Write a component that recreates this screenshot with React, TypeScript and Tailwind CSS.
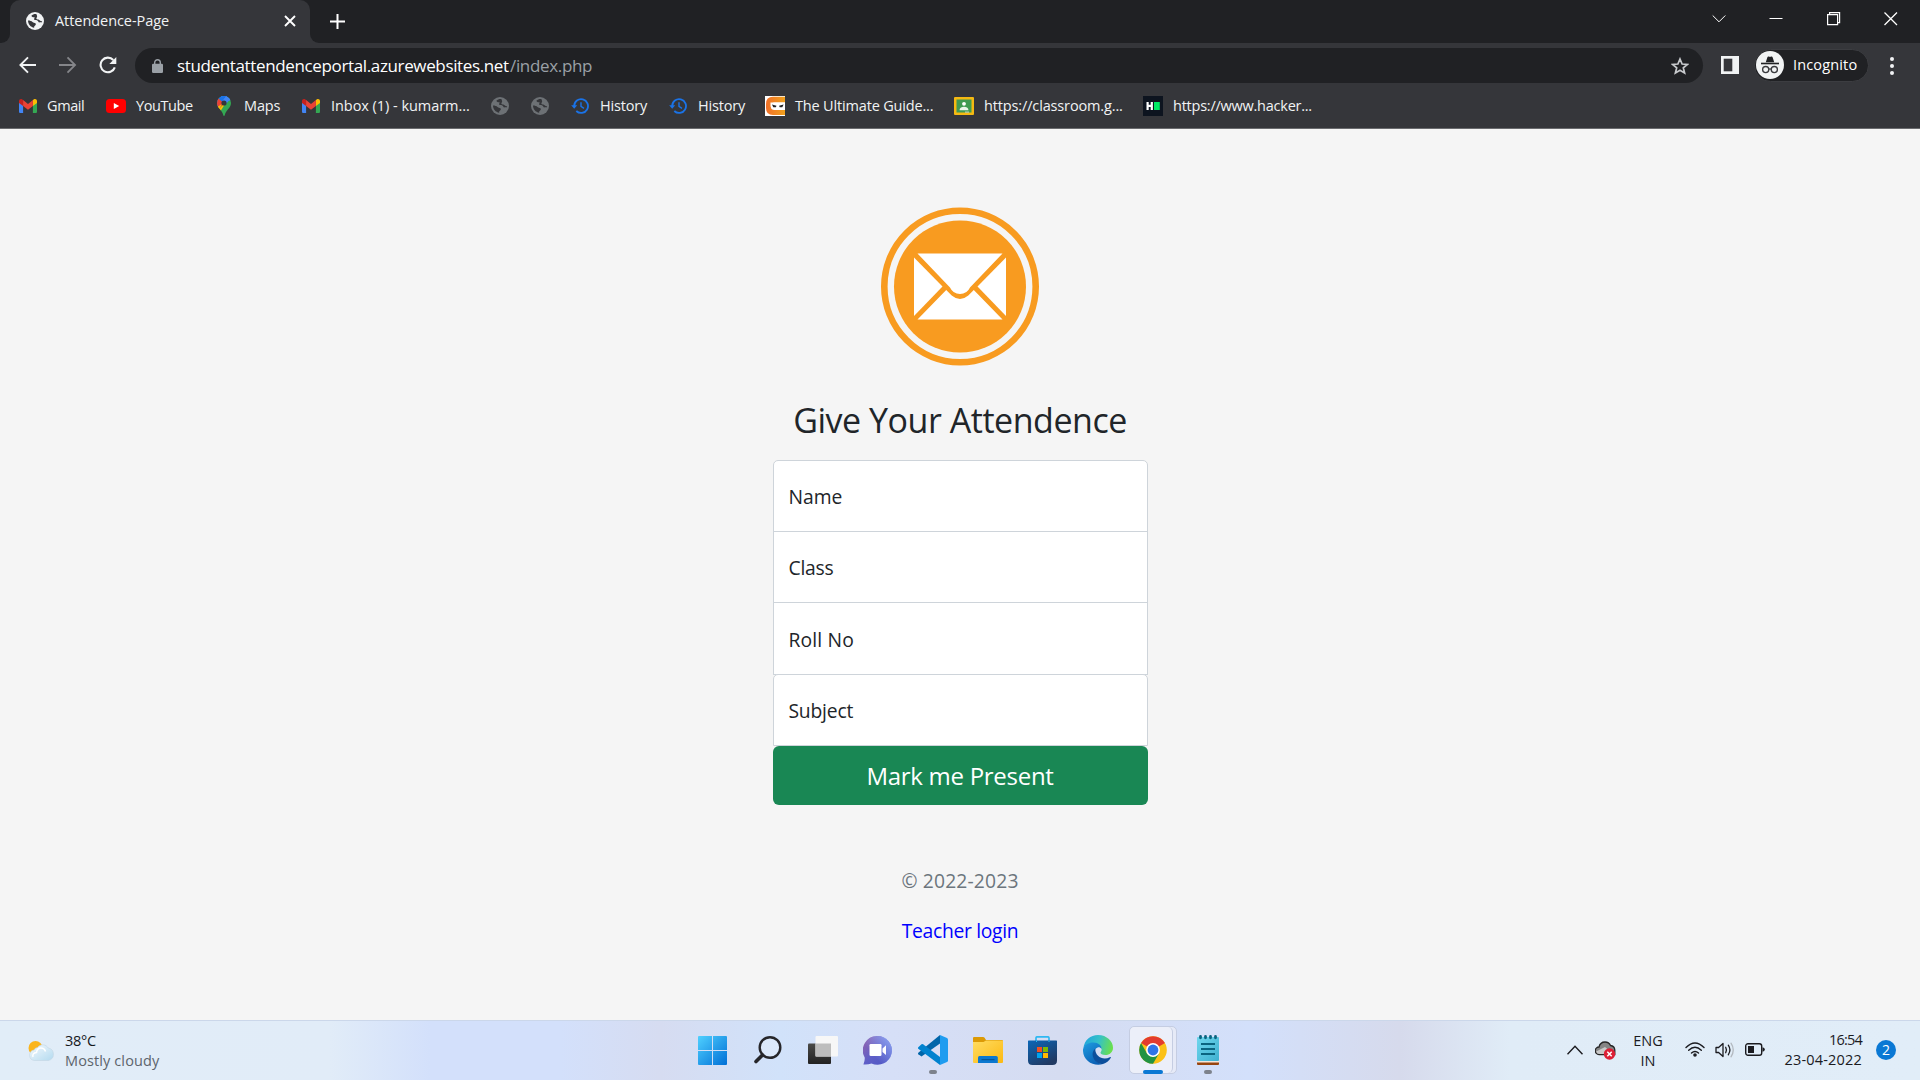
import React from 'react';

function Globe({ className }: { className: string }) {
  return (
    <svg viewBox="0 0 18 18" className={className}>
      <circle cx="9" cy="9" r="9" fill="currentColor" />
      <path
        d="M10.3 2.1C8.2 1.9 6.6 2.6 5.4 3.8c.3 1.3 1.500 1.500 2.700 1.500.9 0 .7.8.2 1.100-.7.5-.2 1.500.8 1.500 1.700 0 3 .5 3.200 1.600.2.9 1.100 1 2 .8.6-.1 1.100 0 1.500.3.2-.5.3-1 .3-1.600-.6.3-1.300.4-1.900-.2-.7-.7-1.400-1.300-2.500-1.300-1 0-1.500-.6-1.300-1.400.2-.7.7-.8.7-1.700 0-.8-.3-1.500-.8-2.300z"
        className="fill-[#35363a]"
      />
      <path
        d="M2 8.600c0 3.600 2.600 6.700 6.200 7.200-.2-1 .1-1.800.9-2.300.9-.6.9-1.500.3-2.200-.8-.9-1.900-.6-2.900-1.400C5.600 9.200 4 8.600 2 8.600z"
        className="fill-[#35363a]"
      />
    </svg>
  );
}

function GmailIcon() {
  return (
    <svg viewBox="0 0 18 14" className="ml-px h-[14px] w-[18px]">
      <path d="M0 2v10.700C0 13.400.6 14 1.300 14h2.800V5z" fill="#4285f4" />
      <path d="M18 2v10.700c0 .7-.6 1.300-1.300 1.300h-2.800V5z" fill="#34a853" />
      <path d="M0 2C0 .3 1.900-.6 3.300.5l.8.600V7L0 4z" fill="#c5221f" />
      <path d="M18 2c0-1.700-1.900-2.600-3.300-1.500l-.8.600V7L18 4z" fill="#fbbc04" />
      <path d="M4.100 1.100 9 4.900l4.900-3.800V7L9 10.700 4.100 7z" fill="#ea4335" />
    </svg>
  );
}

function YoutubeIcon() {
  return (
    <svg viewBox="0 0 20 14" className="h-[14px] w-5">
      <rect width="20" height="14" rx="3.500" fill="#f00" />
      <path d="M7.800 4v6l5.400-3z" fill="#fff" />
    </svg>
  );
}

function MapsIcon() {
  return (
    <svg viewBox="0 0 14 20" className="ml-[3px] h-5 w-[14px]">
      <clipPath id="pin">
        <path d="M7 0a7 7 0 0 1 7 7c0 3-1.700 4.700-3.200 6.500C9.200 15.500 8.300 17 7.800 19c-.2 1.300-1.400 1.300-1.600 0-.5-2-1.400-3.500-3-5.500C1.700 11.700 0 10 0 7a7 7 0 0 1 7-7z" />
      </clipPath>
      <g clipPath="url(#pin)">
        <rect width="14" height="20" fill="#34a853" />
        <path d="M-1 14 14-3v-2H-2z" fill="#1a73e8" />
        <path d="M3 0 14-2v6L7 7z" fill="#4285f4" />
        <path d="M-1 1 1.800 2.500 7 7 2.500 12.500-2 9z" fill="#ea4335" />
        <path d="M2.400 12.700 11.700 1.800 8 8 3.600 15-1 13l2-2.500L5 8z" fill="#fbbc04" />
        <path d="M1.600 2.600 5 5.400 9.500 0H4z" fill="#1a73e8" />
        <path d="M9.500 0 5 5.400 9 8l4-5z" fill="#4285f4" />
      </g>
      <circle cx="7" cy="7" r="2.600" fill="#35363a" />
    </svg>
  );
}

function HistoryIcon() {
  return (
    <svg viewBox="0 0 18 16" className="ml-px h-4 w-[18px]" fill="none" stroke="#1a73e8" strokeWidth="1.800">
      <path d="M3.200 8a6.900 6.900 0 1 1 2.100 5" />
      <path d="M.2 7.300h6L3.200 10.700z" fill="#1a73e8" stroke="none" />
      <path d="M10 4.200v4.200l3 1.900" strokeWidth="1.400" />
    </svg>
  );
}

function NinjaIcon() {
  return (
    <svg viewBox="0 0 20 20" className="h-5 w-5">
      <defs>
        <linearGradient id="nj" x2="1">
          <stop stopColor="#f0702a" />
          <stop offset="1" stopColor="#f0a01c" />
        </linearGradient>
      </defs>
      <rect width="20" height="20" fill="#fff" />
      <path d="M20 .8v5.700H9.500Q6 6.500 6 9.500v1.500q0 3 3.500 3H20v5H8q-7 0-7-7V8Q1 .8 8 .8z" fill="url(#nj)" />
      <path d="M5.500 6.500H20v6.500H9q-3.500 0-3.500-3.500z" fill="#fff" />
      <path d="M7 8.600l4.500 1.200-.6 1.500H8.300zM18.600 8.600l-4.500 1.200.6 1.500h2.600z" fill="#222" />
    </svg>
  );
}

function ClassroomIcon() {
  return (
    <svg viewBox="0 0 20 18" className="mt-px h-[18px] w-5">
      <rect width="20" height="18" rx="1" fill="#f5b912" />
      <rect x="2.500" y="2.500" width="15" height="13" fill="#3f9a52" />
      <circle cx="10" cy="6.800" r="1.900" fill="#fff" />
      <path d="M5.600 12.800c0-2 2.300-3.100 4.400-3.100s4.400 1.100 4.400 3.100v.4H5.600z" fill="#e8f5e9" />
      <path d="M11 14.600h4v.9h-4z" fill="#ddd" />
    </svg>
  );
}

function HackerRankIcon() {
  return (
    <svg viewBox="0 0 20 20" className="h-5 w-5">
      <rect width="20" height="20" fill="#0d141f" />
      <path d="M3.500 6h2.200v2.800h2V6h2.200v8H7.700v-3h-2v3H3.500z" fill="#fff" />
      <rect x="11" y="6" width="5.800" height="8" fill="#00ea64" />
    </svg>
  );
}

const bookmarks: { icon: React.ReactNode; text: string; box: string; label: string }[] = [
  { icon: <GmailIcon />, text: 'Gmail', box: 'w-[88px]', label: 'tracking-[-0.4px] -ml-px' },
  { icon: <YoutubeIcon />, text: 'YouTube', box: 'w-[108px]', label: 'tracking-[-0.4px]' },
  { icon: <MapsIcon />, text: 'Maps', box: 'w-[87px]', label: 'tracking-[-0.16px]' },
  { icon: <GmailIcon />, text: 'Inbox (1) - kumarm...', box: 'w-[189px]', label: 'tracking-[-0.045px]' },
  { icon: <Globe className="ml-px h-[18px] w-[18px] text-[#6d7175]" />, text: '', box: 'w-10', label: '' },
  { icon: <Globe className="ml-px h-[18px] w-[18px] text-[#6d7175]" />, text: '', box: 'w-10', label: '' },
  { icon: <HistoryIcon />, text: 'History', box: 'w-[98px]', label: 'tracking-[-0.2px]' },
  { icon: <HistoryIcon />, text: 'History', box: 'w-[97px]', label: 'tracking-[-0.2px]' },
  { icon: <NinjaIcon />, text: 'The Ultimate Guide...', box: 'w-[189px]', label: 'tracking-[-0.17px]' },
  { icon: <ClassroomIcon />, text: 'https://classroom.g...', box: 'w-[189px]', label: 'tracking-[-0.14px]' },
  { icon: <HackerRankIcon />, text: 'https://www.hacker...', box: 'w-[189px]', label: 'tracking-[-0.24px]' },
];

function TabStrip() {
  return (
    <div className="flex h-[43px] items-stretch bg-[#202124]">
      <div className="flex w-[10px] items-end bg-[#35363a]">
        <div className="h-full w-full rounded-br-[9px] bg-[#202124]" />
      </div>
      <div className="bg-[#202124]">
        <div className="flex h-full w-[300px] items-center rounded-t-[10px] bg-[#35363a] pl-4">
          <Globe className="mt-[-1px] h-[18px] w-[18px] text-[#f1f3f4]" />
          <span className="mt-[-1px] ml-[11px] w-[229px] text-[14.5px] tracking-[-0.06px] text-[#f1f3f4]">Attendence-Page</span>
          <svg viewBox="0 0 12 12" className="mt-[-2px] h-3 w-3" stroke="#fff" strokeWidth="1.900">
            <path d="M1 1l10 10M11 1L1 11" />
          </svg>
        </div>
      </div>
      <div className="flex w-[10px] items-end bg-[#35363a]">
        <div className="h-full w-full rounded-bl-[9px] bg-[#202124]" />
      </div>
      <div className="flex flex-1 items-center pl-[10px]">
        <svg viewBox="0 0 15 15" className="h-[15px] w-[15px]" stroke="#fff" strokeWidth="2">
          <path d="M7.500 0v15M0 7.500h15" />
        </svg>
      </div>
      <div className="flex w-[209px] items-start gap-[43px] pt-3 text-white">
        <svg viewBox="0 0 14 14" className="ml-px h-[14px] w-[14px]" fill="none" stroke="currentColor" strokeWidth="1">
          <path d="M.7 3.500 7 9.800l6.300-6.300" />
        </svg>
        <svg viewBox="0 0 14 14" className="h-[14px] w-[14px]" stroke="currentColor">
          <path d="M.5 6.500h13" />
        </svg>
        <svg viewBox="0 0 14 14" className="ml-px h-[14px] w-[14px]" fill="none" stroke="currentColor" strokeWidth="1.200">
          <path d="M.6 2.600h10v10H.6zM2.600 2.600v-2h10v10h-2" />
        </svg>
        <svg viewBox="0 0 14 14" className="h-[14px] w-[14px]" stroke="currentColor" strokeWidth="1.300">
          <path d="M.5.5l12.500 12.500M13 .5L.5 13" />
        </svg>
      </div>
    </div>
  );
}

function Toolbar() {
  return (
    <div className="flex h-10 items-start bg-[#35363a] pt-[5px]">
      <div className="flex h-[35px] w-[135px] items-center pl-[19px] text-[#f1f3f4]">
        <svg viewBox="0 0 18 18" className="mt-[-1px] mr-[22px] h-[18px] w-[18px]" fill="none" stroke="currentColor" strokeWidth="1.900">
          <path d="M17 9H1.500M9 1.300 1.400 9 9 16.700" />
        </svg>
        <svg viewBox="0 0 18 18" className="mt-[-1px] mr-[22px] h-[18px] w-[18px] text-[#85868a]" fill="none" stroke="currentColor" strokeWidth="1.800">
          <path d="M0 9h16M8.500 1.300 16.100 9l-7.600 7.700" />
        </svg>
        <svg viewBox="0 0 18 18" className="mt-[-1px] h-[18px] w-[18px]" fill="none" stroke="currentColor" strokeWidth="2.100">
          <path d="M15.800 11.300A7.300 7.300 0 1 1 14.300 4" />
          <path d="M17.300 1v7h-7z" fill="currentColor" stroke="none" />
        </svg>
      </div>
      <div className="flex h-[35px] w-[1568px] items-center rounded-full bg-[#202124] pr-[14px] pl-[17px]">
        <svg viewBox="0 0 11 14" className="h-[14px] w-[11px]">
          <path d="M2.700 6V3.500a2.800 2.800 0 0 1 5.600 0V6" fill="none" stroke="#9aa0a6" strokeWidth="1.400" />
          <rect y="4.800" width="11" height="9.200" rx="1.200" fill="#9aa0a6" />
        </svg>
        <span className="mt-px ml-[14px] w-[333px] text-[17px] tracking-[-0.36px] whitespace-nowrap text-white">
          studentattendenceportal.azurewebsites.net
        </span>
        <span className="mt-px flex-1 text-[17px] tracking-[-0.34px] text-[#9aa0a6]">/index.php</span>
        <svg viewBox="0 0 18 18" className="h-[18px] w-[18px]" fill="none" stroke="#c8cacd" strokeWidth="1.700">
          <path d="M9 2l2.100 5 5.300.4-4.100 3.400 1.300 5.200L9 13.200 4.400 16l1.300-5.200L1.600 7.400 6.900 7z" />
        </svg>
      </div>
      <div className="flex h-[35px] flex-1 items-center">
        <svg viewBox="0 0 18 18" className="mt-[-1px] ml-[18px] h-[18px] w-[18px]">
          <rect width="18" height="18" fill="#f1f3f4" />
          <rect x="2.700" y="2.700" width="8.600" height="12.600" fill="#35363a" />
        </svg>
        <div className="mt-[-1px] ml-[15px] flex h-[33px] w-[115px] items-center rounded-full border border-[#3c3d41] bg-[#202124] pl-px">
          <svg viewBox="0 0 28 28" className="h-7 w-7">
            <circle cx="14" cy="14" r="14" fill="#f1f3f4" />
            <path d="M9.800 11.200l1.500-4.800c.3-.8.900-1.100 1.700-.8l1 .3 1-.3c.8-.3 1.400 0 1.700.8l1.500 4.800z" fill="#202124" />
            <rect x="5" y="11.700" width="18" height="1.600" fill="#202124" />
            <g fill="none" stroke="#3a3b3f" strokeWidth="1.300">
              <circle cx="9.700" cy="18.600" r="3.100" />
              <circle cx="18.300" cy="18.600" r="3.100" />
              <path d="M12.800 18.300q1.200-.9 2.400 0" />
            </g>
          </svg>
          <span className="mt-[-1px] ml-[9px] text-[14.5px] tracking-[0.15px] text-white">Incognito</span>
        </div>
        <div className="ml-[21px] flex flex-col gap-[3px]">
          <i className="h-1 w-1 rounded-full bg-[#f1f3f4]" />
          <i className="h-1 w-1 rounded-full bg-[#f1f3f4]" />
          <i className="h-1 w-1 rounded-full bg-[#f1f3f4]" />
        </div>
      </div>
    </div>
  );
}

function BookmarksBar() {
  return (
    <div className="flex h-[46px] items-center border-b border-[#6a6b6e] bg-[#35363a] pl-[18px]">
      {bookmarks.map((b, i) => (
        <div key={i} className={'flex shrink-0 items-center ' + b.box}>
          <span className="flex w-[30px] shrink-0 items-center">{b.icon}</span>
          <span className={'text-[14.5px] leading-5 whitespace-nowrap text-[#f1f3f4] ' + b.label}>{b.text}</span>
        </div>
      ))}
    </div>
  );
}

function EnvelopeLogo() {
  return (
    <svg viewBox="0 -0.5 160 160" className="h-40 w-40">
      <circle cx="80" cy="80" r="75.700" fill="none" stroke="#f89b20" strokeWidth="6.600" />
      <circle cx="80" cy="80" r="66" fill="#f89b20" />
      <g fill="#fff">
        <path d="M37.500 47h85L90 81q-3 6.500-10 6.500T70 81z" />
        <path d="M34 51 62.500 80 34 109.500z" />
        <path d="M126 51 97.500 80 126 109.500z" />
        <path d="M37.500 113 66.200 83.500l5.500 5.500q8.300 7 16.600 0l5.500-5.500 28.700 29.500z" />
      </g>
    </svg>
  );
}

function AttendancePage() {
  return (
    <main className="flex h-[891px] flex-col items-center bg-[#f5f5f5] pt-[77px] text-[#212529]">
      <EnvelopeLogo />
      <h1 className="mt-[33px] h-[42px] text-[34px] leading-[42px] tracking-[-0.47px] whitespace-nowrap">Give Your Attendence</h1>
      <form className="mt-[19px] flex w-[375px] flex-col text-[19.3px]">
        <div className="flex h-[72px] items-center rounded-t-[5px] border border-[#ced4da] bg-white pt-0.5 pl-[15px] tracking-[-0.03px]">Name</div>
        <div className="mt-[-1px] flex h-[72px] items-center border border-[#ced4da] bg-white pt-0.5 pl-[15px] tracking-[-0.23px]">Class</div>
        <div className="mt-[-1px] flex h-[73px] items-center border border-[#ced4da] bg-white pt-[3px] pl-[15px] tracking-[0.15px]">Roll No</div>
        <div className="mt-[-1px] flex h-[72px] items-center rounded-t-[5px] border border-[#ced4da] bg-white pt-0.5 pl-[15px] tracking-[-0.2px]">
          Subject
        </div>
        <button type="button" className="h-[59px] rounded-[6px] bg-[#198754] text-[24px] tracking-[-0.28px] text-white">
          Mark me Present
        </button>
      </form>
      <p className="mt-[61px] h-[30px] text-[19.3px] leading-[30px] tracking-[0.16px] text-[#6c757d]">© 2022-2023</p>
      <a className="mt-5 h-[30px] text-[19.3px] leading-[30px] tracking-[-0.31px] text-[#0000ff]">Teacher login</a>
    </main>
  );
}

function AppSlot({ children, mark }: { children: React.ReactNode; mark?: string }) {
  return (
    <div className="flex h-full w-[55px] flex-col items-center pt-[15px]">
      <div className="flex h-[30px] items-center justify-center">{children}</div>
      {mark && <i className={'mt-[5px] h-1 rounded-full ' + mark} />}
    </div>
  );
}

function TaskbarApps() {
  return (
    <div className="flex h-full w-[550px]">
      <AppSlot>
        <svg viewBox="0 0 29 29" className="h-[29px] w-[29px]">
          <defs>
            <linearGradient id="win" x1="0" y1="0" x2="1" y2="1" gradientTransform="scale(29)" gradientUnits="userSpaceOnUse">
              <stop stopColor="#4fd0ff" />
              <stop offset="1" stopColor="#006fd6" />
            </linearGradient>
          </defs>
          <path d="M0 1q0-1 1-1h13v14H0zM15 0h13q1 0 1 1v13H15zM0 15h14v14H1q-1 0-1-1zM15 15h14v13q0 1-1 1H15z" fill="url(#win)" />
        </svg>
      </AppSlot>
      <AppSlot>
        <svg viewBox="0 0 28 28" className="h-7 w-7" fill="none" stroke="#26262a">
          <circle cx="16" cy="11.500" r="10.300" strokeWidth="2.400" fill="#e6effb" fillOpacity=".5" />
          <path d="M8.500 19 2 25.500" strokeWidth="3.600" strokeLinecap="round" />
        </svg>
      </AppSlot>
      <AppSlot>
        <svg viewBox="0 0 30 28" className="h-7 w-[30px]">
          <defs>
            <linearGradient id="tv" x2="0" y2="1">
              <stop stopColor="#4a4a48" />
              <stop offset="1" stopColor="#222" />
            </linearGradient>
          </defs>
          <rect y="7.500" width="23" height="20.500" rx="1" fill="url(#tv)" />
          <rect x="7.500" width="22.500" height="20.500" rx="1" fill="#f7f7f7" />
          <rect x="7.500" y="7.500" width="15.500" height="13" fill="#bdbdbd" />
        </svg>
      </AppSlot>
      <AppSlot>
        <svg viewBox="0 0 29 29" className="h-[29px] w-[29px]">
          <defs>
            <linearGradient id="chat" x2="1" y2="1">
              <stop stopColor="#9a62a8" />
              <stop offset=".5" stopColor="#5f5fc7" />
              <stop offset="1" stopColor="#4b54c4" />
            </linearGradient>
            <linearGradient id="chat2" x1="1" x2="0.300" y2=".6">
              <stop stopColor="#8fa8f5" />
              <stop offset="1" stopColor="#8fa8f5" stopOpacity="0" />
            </linearGradient>
          </defs>
          <path d="M14.500 0A14.400 14.400 0 1 1 8.500 27.500Q5 28.800.4 28.500 2 25 1.700 21.500A14.400 14.400 0 0 1 14.500 0z" fill="url(#chat)" />
          <circle cx="14.500" cy="14.400" r="14.400" fill="url(#chat2)" />
          <rect x="6.500" y="8" width="12" height="12" rx="1.300" fill="#fff" />
          <path d="M19.500 12.500 23 9.300v9.800l-3.500-3.200z" fill="#fff" />
        </svg>
      </AppSlot>
      <AppSlot mark="w-2 bg-[#7d828c]">
        <svg viewBox="0 0 30 30" className="h-[30px] w-[30px]">
          <path d="M22 0v8.500L3.500 21.500.3 19.300q-.6-.8 0-1.600z" fill="#0065a9" />
          <path d="M.3 12.300 3.500 9.300q.8-.5 1.600 0L22 22v8L.3 13.800q-.6-.8 0-1.500z" fill="#0082cf" />
          <path d="M22 0l7 3q1 .6 1 1.600v20.800q0 1-1 1.600l-7 3z" fill="#1f9cf0" />
        </svg>
      </AppSlot>
      <AppSlot>
        <svg viewBox="0 0 30 26" className="h-[26px] w-[30px]">
          <defs>
            <linearGradient id="fold" x2="1" y2="1">
              <stop stopColor="#ffdc62" />
              <stop offset="1" stopColor="#fcb912" />
            </linearGradient>
          </defs>
          <path d="M0 1q0-1 1-1h9q1 0 1.600.700L13 3h16q1 0 1 1v6H0z" fill="#dc9a06" />
          <path d="M0 5h10.500L13 3.500h17V25q0 1-1 1H1q-1 0-1-1z" fill="url(#fold)" />
          <path d="M5 26v-5.500Q5 19 6.500 19h16.700q1.600 0 1.600 1.500V26z" fill="#0b78d0" />
          <path d="M8.500 22.700h13" stroke="#064f8c" />
        </svg>
      </AppSlot>
      <AppSlot>
        <svg viewBox="0 0 29 29" className="h-[29px] w-[29px]">
          <defs>
            <linearGradient id="st" x2=".6" y2="1">
              <stop stopColor="#0b67b8" />
              <stop offset="1" stopColor="#213a63" />
            </linearGradient>
          </defs>
          <path d="M8 6V2q0-1.200 1.200-1.200h10.600Q21 .8 21 2v4" fill="none" stroke="#2fb8f2" strokeWidth="1.700" />
          <path d="M0 5q0-.6.600-.6h27.800q.6 0 .6.600v19.500q0 4.500-4.500 4.500h-20Q0 29 0 24.500z" fill="url(#st)" />
          <path d="M8 4.400h1v1.500H8zM20.500 4.400h1v1.500h-1z" fill="#2fb8f2" />
          <path d="M9 11h5v5H9z" fill="#f25022" />
          <path d="M15 11h5v5h-5z" fill="#7fba00" />
          <path d="M9 17h5v5H9z" fill="#00a4ef" />
          <path d="M15 17h5v5h-5z" fill="#ffb900" />
        </svg>
      </AppSlot>
      <AppSlot>
        <svg viewBox="0 0 30 30" className="h-[30px] w-[30px]">
          <defs>
            <linearGradient id="e1" x1="0" x2="1" y1=".3" y2=".5">
              <stop stopColor="#1fa5dd" />
              <stop offset=".5" stopColor="#35c1c8" />
              <stop offset="1" stopColor="#6be04b" />
            </linearGradient>
            <linearGradient id="e2" x2=".6" y2="1">
              <stop stopColor="#1f9de0" />
              <stop offset="1" stopColor="#0a5fb5" />
            </linearGradient>
          </defs>
          <path d="M.4 13C1.500 5 7.500 0 15 0c9 0 15 6.500 15 12.700 0 4.600-3.500 7.300-7.500 7.300-3.500 0-5-1.300-5-2.200 0-.8 1.100-1.300 1.100-3.300 0-3-3-6-8-6C5.500 8.500 1.500 10.500.4 13z" fill="url(#e1)" />
          <path d="M0 14.500C.8 9.500 5.500 7.500 10.300 7.500c5.200 0 8.300 3 8.300 6.500-1-1.500-2.500-2-4-1.500-3 1-4.800 5-3.600 9 1.200 4.200 4.500 7 9 7.500C10.500 32-.5 25.500 0 14.500z" fill="url(#e2)" />
          <path d="M12.300 13.800c-2.800 2-3.300 5.700-2 8.700 1.500 4 5.500 6.700 9.700 6.500 3.300-1 6-3 7.700-6 .4-.8-.2-1.200-.9-.8-6.300 3.300-14.800-.2-14.500-8.400z" fill="#0c4f9c" />
        </svg>
      </AppSlot>
      <div className="flex h-full w-[55px] pt-[6px] pl-[4px]">
        <div className="h-12 w-12 rounded-[5px] border border-[#c5cde2] bg-[#e6eaf7]">
          <div className="flex h-[46px] w-[43px] flex-col items-center rounded-[5px] border-r border-[#c5cde2] bg-[#eceff9] pt-[9px]">
            <svg viewBox="0 0 28 28" className="ml-1 h-7 w-7 shrink-0">
              <circle cx="14" cy="14" r="13.800" fill="#fbc116" />
              <path d="M14 14 2.050 7.100A13.800 13.800 0 0 1 25.950 7.100z" fill="#e33b2e" />
              <path d="M14 27.800l5.980-10.350L14 20.900 8 17.450 2.050 7.100A13.800 13.800 0 0 0 14 27.800z" fill="#229342" />
              <circle cx="14" cy="14" r="6.900" fill="#fff" />
              <circle cx="14" cy="14" r="5.400" fill="#2f74e8" />
            </svg>
            <i className="mt-[6px] ml-1 h-1 w-5 shrink-0 rounded-full bg-[#0a78d4]" />
          </div>
        </div>
      </div>
      <AppSlot mark="w-2 bg-[#7d828c]">
        <svg viewBox="0 0 22 30" className="h-[30px] w-[22px]">
          <defs>
            <linearGradient id="np" x2="1" y2="1">
              <stop stopColor="#6fd7ee" />
              <stop offset="1" stopColor="#3fb0d0" />
            </linearGradient>
          </defs>
          <path d="M0 27h22v2q0 1-1 1H1q-1 0-1-1z" fill="#974510" />
          <path d="M0 25.500h22v2H0z" fill="#f3e6dc" />
          <rect y="2" width="22" height="24" rx="1" fill="url(#np)" />
          <path d="M4 9h14M4 14h14M4 19h14" stroke="#0b6480" strokeWidth="1.900" />
          <path d="M3.500 1.500v1.300M8.500 1.500v1.300M13.500 1.500v1.300M18.500 1.500v1.300" stroke="#0b6480" strokeWidth="2.800" strokeLinecap="round" />
        </svg>
      </AppSlot>
    </div>
  );
}

function Tray() {
  return (
    <div className="flex h-full w-[353px] items-start text-[14.5px] leading-5 text-[#1b1b1f]">
      <svg viewBox="0 0 16 10" className="mt-[25px] h-[10px] w-4" fill="none" stroke="currentColor" strokeWidth="1.400">
        <path d="M.5 9.200 8 1.200l7.500 8" />
      </svg>
      <svg viewBox="0 0 21 19" className="mt-[21px] ml-3 h-[19px] w-[21px]">
        <path d="M4 13.500A3.700 3.700 0 0 1 4 6q1.200-5 6-5 4 0 5.500 3.500Q19.500 5 19.800 9v4.500z" fill="#858585" stroke="#262626" strokeWidth="1.300" />
        <path d="M1.200 10.500 10 6l8.500 7H4q-2.500-.5-2.800-2.500z" fill="#c9c9c9" />
        <circle cx="14.500" cy="13" r="5.700" fill="#dc1f35" />
        <path d="M12.300 10.800l4.400 4.400M16.700 10.800l-4.400 4.400" stroke="#fff" strokeWidth="1.500" />
      </svg>
      <div className="mt-[11px] ml-[17px] w-[30px] text-center">
        <div>ENG</div>
        <div>IN</div>
      </div>
      <svg viewBox="0 0 20 15" className="mt-[22px] ml-[22px] h-[15px] w-5" fill="none" stroke="currentColor" strokeWidth="1.400" strokeLinecap="round">
        <path d="M1 5.500q9-9 18 0M3.700 8.300q6.300-6 12.600 0M6.500 11q3.500-3.200 7 0" />
        <circle cx="10" cy="13" r="1.100" fill="currentColor" />
      </svg>
      <svg viewBox="0 0 20 16" className="mt-[22px] ml-[10px] h-4 w-5" fill="none" stroke="currentColor" strokeWidth="1.300" strokeLinecap="round">
        <path d="M1 5.500h2.600L8 1.500v13l-4.400-4H1z" strokeLinejoin="round" />
        <path d="M10.700 5.300q1.600 2.700 0 5.400M13.300 3.200q3.200 4.800 0 9.600" />
        <path d="M16 1.200q4.500 6.800 0 13.600" stroke="#b3b9c0" />
      </svg>
      <svg viewBox="0 0 20 13" className="mt-[23px] ml-[10px] h-[13px] w-5">
        <rect x=".7" y=".7" width="16" height="11.600" rx="2.300" fill="none" stroke="currentColor" strokeWidth="1.400" />
        <rect x="3" y="3" width="6" height="7" fill="currentColor" />
        <path d="M17.500 4.200q2.300.3 2.300 2.300t-2.300 2.300z" fill="currentColor" />
      </svg>
      <div className="mt-[10px] w-[97px] text-right">
        <div className="tracking-[-0.8px]">16:54</div>
        <div className="tracking-[0.18px]">23-04-2022</div>
      </div>
      <div className="mt-5 ml-[14px] flex h-5 w-5 items-center justify-center rounded-full bg-[#0a78d4] text-[14px] text-white">2</div>
    </div>
  );
}

function Taskbar() {
  return (
    <footer className="flex h-[60px] w-full bg-[linear-gradient(90deg,#e1edf8_0px,#e1ecf8_330px,#d3e0fb_430px,#d3e0fb_560px,#d6dcf1_660px,#d1e2fa_780px,#d6dff7_890px,#d5dcf1_1060px,#d3e0fb_1250px,#d6daec_1400px,#e0ecf7_1510px,#e1edf8_1920px)] shadow-[inset_0_1px_0_#cbd7ea]">
      <div className="flex w-[685px] items-start pl-7">
        <svg viewBox="0 0 28 22" className="mt-5 h-[22px] w-7">
          <defs>
            <linearGradient id="cl" x2="1" y2="1">
              <stop stopColor="#f4f9fe" />
              <stop offset="1" stopColor="#b3daef" />
            </linearGradient>
          </defs>
          <circle cx="7.500" cy="8" r="7" fill="#fbb51d" />
          <path d="M6.500 20.500a5.300 5.300 0 0 1-.5-10.500 4 4 0 0 1 3.500-2.500 6.500 6.500 0 0 1 10.800.5A6.400 6.400 0 0 1 20.500 20.500z" fill="url(#cl)" stroke="#c4d5e2" strokeWidth=".6" />
          <path d="M5 17q-1-4 3.500-4.500Q9 8 13 8q3.500 0 4.500 3.500" fill="none" stroke="#fff" strokeWidth="1.500" />
        </svg>
        <div className="mt-[11px] ml-[9px] text-[14.5px] leading-5">
          <div className="tracking-[-0.26px] text-[#16181c]">38°C</div>
          <div className="tracking-[0.11px] text-[#5d646c]">Mostly cloudy</div>
        </div>
      </div>
      <TaskbarApps />
      <div className="w-[332px]" />
      <Tray />
    </footer>
  );
}

export default function App() {
  return (
    <div className="flex h-[1080px] w-[1920px] flex-col overflow-hidden font-['Open_Sans','Noto_Sans',sans-serif]">
      <TabStrip />
      <Toolbar />
      <BookmarksBar />
      <AttendancePage />
      <Taskbar />
    </div>
  );
}
